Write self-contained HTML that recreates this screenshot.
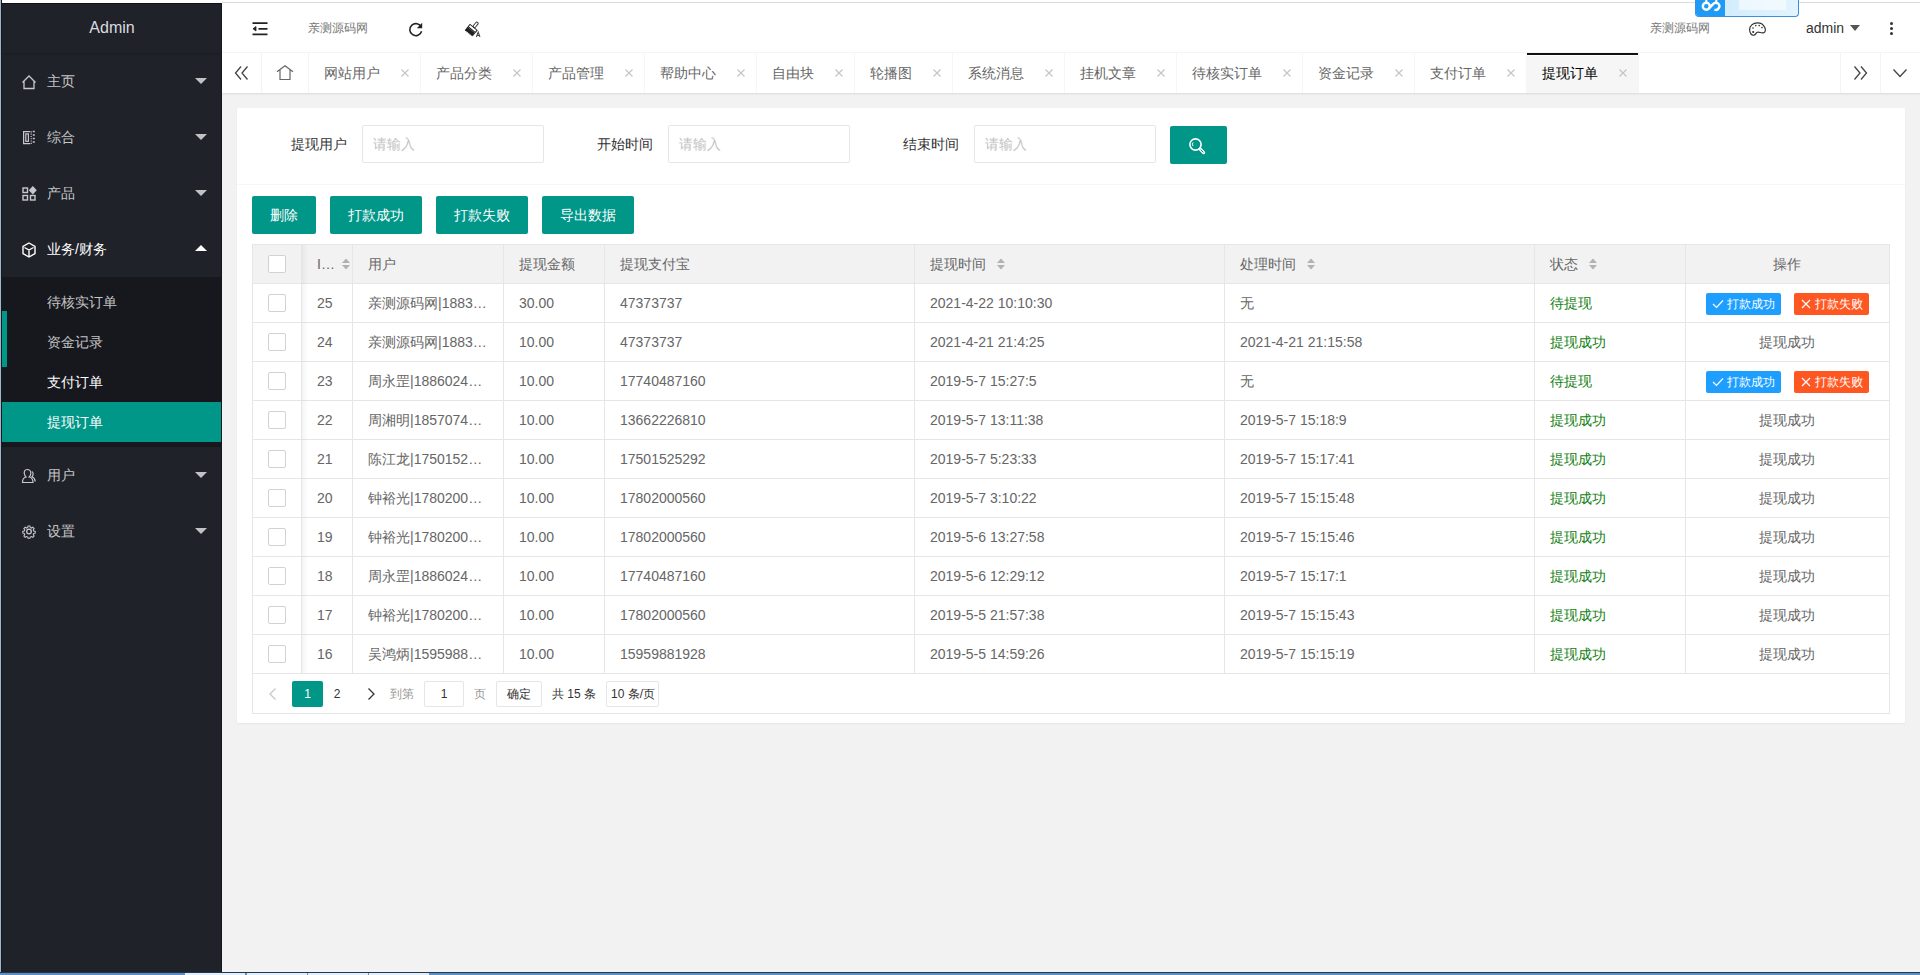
<!DOCTYPE html>
<html><head><meta charset="utf-8">
<style>
*{box-sizing:border-box;margin:0;padding:0}
html,body{width:1920px;height:975px;overflow:hidden;background:#f2f2f2;font-family:"Liberation Sans",sans-serif;font-size:14px;color:#666}
.abs{position:absolute}
#edge0{left:0;top:0;width:1px;height:975px;background:#a8b4c2}
#edge1{left:1px;top:0;width:1px;height:975px;background:#0e1b2b}
#topw{left:0;top:0;width:1920px;height:3px;background:#fff}
#topline{left:222px;top:2px;width:1698px;height:1px;background:#dcdcdc}
#side{left:2px;top:3px;width:220px;height:969px;background:#20222a}
#sidetop{left:2px;top:3px;width:220px;height:1px;background:#0f1115}
#sideright{left:221px;top:3px;width:1px;height:969px;background:#16181d}
#logo{left:2px;top:3px;width:220px;height:50px;line-height:50px;text-align:center;color:rgba(255,255,255,.85);font-size:16px;box-shadow:0 1px 2px 0 rgba(0,0,0,.15)}
.nav{left:2px;width:220px;height:56px;color:rgba(255,255,255,.75)}
.nav .t{position:absolute;left:45px;top:0;line-height:56px;font-size:14px}
.nav svg.ic{position:absolute;left:20px;top:20px}
.nav .tri{position:absolute;left:193px;top:25px;width:0;height:0;border-left:6px solid transparent;border-right:6px solid transparent;border-top:6px solid #c2c2c2}
.nav .tri.up{border-top:none;border-bottom:6px solid #fff;top:24px}
#sub{left:2px;top:277px;width:220px;height:170px;background:#17181e}
.child{left:2px;width:220px;height:40px;line-height:40px;color:rgba(255,255,255,.75)}
.child span{position:absolute;left:45px}
#bar{left:2px;top:311px;width:5px;height:56px;background:#009688}
#header{left:222px;top:3px;width:1698px;height:50px;background:#fff;border-bottom:1px solid #f6f6f6}
#tabs{left:222px;top:53px;width:1698px;height:40px;background:#fff;box-shadow:0 1px 2px 0 rgba(0,0,0,.1)}
.tab{position:absolute;top:0;height:40px;line-height:40px;border-right:1px solid #f6f6f6;color:#666;font-size:14px}
.tab span{position:absolute;left:15px;top:0}
.tab i{position:absolute;right:11px;top:15px;width:10px;height:10px}
#card{left:237px;top:108px;width:1668px;height:615px;background:#fff;border-radius:2px;box-shadow:0 1px 2px 0 rgba(0,0,0,.05)}
#cardhead{left:237px;top:184px;width:1668px;height:1px;background:#f6f6f6}
.lbl{position:absolute;top:134px;line-height:20px;color:#333;font-size:14px}
.inp{position:absolute;top:125px;width:182px;height:38px;border:1px solid #e6e6e6;border-radius:2px;background:#fff}
.inp span{position:absolute;left:10px;top:8px;line-height:20px;color:#c2c2c2}
.btn{position:absolute;top:196px;height:38px;line-height:38px;background:#009688;color:#fff;border-radius:2px;text-align:center;font-size:14px}
#tbl{left:252px;top:244px;width:1638px;height:470px;border:1px solid #e6e6e6;background:#fff}
#thead{left:253px;top:245px;width:1636px;height:38px;background:#f2f2f2}
.hl{position:absolute;left:253px;width:1636px;height:1px;background:#e6e6e6}
.vl{position:absolute;top:245px;width:1px;height:428px;background:#e6e6e6}
.cell{position:absolute;line-height:20px;white-space:nowrap;color:#666}
.cb{position:absolute;left:268px;width:18px;height:18px;border:1px solid #d2d2d2;background:#fff;border-radius:2px}
.sort{position:absolute;width:10px;height:14px}
.g{color:#127f12}
.xbtn{position:absolute;height:22px;line-height:22px;font-size:12px;color:#fff;border-radius:2px;padding-left:21px}
#foot{left:0;top:972px;width:1920px;height:3px;background:#5a8ec4;border-top:1px solid #22364f}
</style></head><body>
<div class="abs" id="topw"></div>
<div class="abs" id="topline"></div>
<div class="abs" id="side"></div>
<div class="abs" id="edge0"></div>
<div class="abs" id="edge1"></div>
<div class="abs" id="logo">Admin</div>


<div class="abs" id="sub"></div>
<div class="abs" id="bar"></div>
<div class="abs child" style="top:402px;background:#009688;color:#fff"><span>提现订单</span></div>
<div class="abs child" style="top:282px"><span>待核实订单</span></div>
<div class="abs child" style="top:322px"><span>资金记录</span></div>
<div class="abs child" style="top:362px;color:#fff"><span>支付订单</span></div>
<div class="abs nav" style="top:53px"><span class="t">主页</span><i class="tri"></i></div>
<div class="abs nav" style="top:109px"><span class="t">综合</span><i class="tri"></i></div>
<div class="abs nav" style="top:165px"><span class="t">产品</span><i class="tri"></i></div>
<div class="abs nav" style="top:221px;color:#fff"><span class="t">业务/财务</span><i class="tri up"></i></div>
<div class="abs nav" style="top:447px"><span class="t">用户</span><i class="tri"></i></div>
<div class="abs nav" style="top:503px"><span class="t">设置</span><i class="tri"></i></div>
<svg class="abs" style="left:20px;top:73px" width="18" height="18" viewBox="0 0 18 18" fill="none" stroke="#c8c8cc" stroke-width="1.3"><path d="M2.5 9.5 L9 3 L15.5 9.5 M4 8.5 V15.5 H14 V8.5"/></svg>
<svg class="abs" style="left:18px;top:126px" width="24" height="22" viewBox="0 0 24 22" fill="none" stroke="#c8c8cc" stroke-width="1.2"><path d="M12.2 5.6 H5.6 V17.6 H12.2"/><rect x="7.8" y="7.9" width="2.6" height="7.4"/><path d="M13.2 5.3 V18" stroke-dasharray="1.1 1.2"/><path d="M14.8 5.6 H16.8 M14.8 9.1 H16.8 M14.8 12.6 H16.8 M14.8 16.1 H16.8" stroke-width="1.5"/></svg>
<svg class="abs" style="left:20px;top:185px" width="18" height="18" viewBox="0 0 18 18" fill="none" stroke="#c8c8cc" stroke-width="1.4"><rect x="3" y="3" width="4.5" height="4.5"/><rect x="3" y="10.5" width="4.5" height="4.5"/><rect x="10.5" y="10.5" width="4.5" height="4.5"/><path d="M12.8 2 L15.8 5.2 L12.8 8.4 L9.8 5.2 Z" fill="#c8c8cc"/></svg>
<svg class="abs" style="left:20px;top:241px" width="18" height="18" viewBox="0 0 18 18" fill="none" stroke="#fff" stroke-width="1.4"><path d="M9 2 L15 5.3 V12.7 L9 16 L3 12.7 V5.3 Z M4.5 6.5 L9 9 L13.5 6.5 M9 9 V15"/></svg>
<svg class="abs" style="left:20px;top:467px" width="18" height="18" viewBox="0 0 18 18" fill="none" stroke="#c8c8cc" stroke-width="1.2"><path d="M7 2.5 C4.8 2.5 4 4.5 4.3 6.5 C4.6 8.5 5.5 9.5 6 10 C4 10.5 2.5 12 2.5 15.5 H13 C13 12 11.5 10.5 9.2 10 C9.8 9.5 10.6 8.5 10.8 6.5 C11 4.5 10 2.5 7 2.5 Z"/><path d="M11.8 4.5 C13.5 5 13.5 8.5 12 9.8 C13.8 10.5 15 12 15.2 14.5"/></svg>
<svg class="abs" style="left:20px;top:522px" width="18" height="18" viewBox="0 0 18 18" fill="none" stroke="#c8c8cc" stroke-width="1.3"><circle cx="9" cy="9.5" r="2.3"/><path d="M7.9 2.8 H10.1 L10.5 4.6 L12 5.3 L13.6 4.3 L15.1 5.9 L14.1 7.4 L14.7 8.9 L16.4 9.3 V11.4 L14.7 11.8 L14.1 13.3 L15.1 14.8 L13.6 16.3 L12 15.4 L10.5 16 L10.1 17.4 H7.9 L7.5 16 L6 15.4 L4.4 16.3 L2.9 14.8 L3.9 13.3 L3.3 11.8 L1.6 11.4 V9.3 L3.3 8.9 L3.9 7.4 L2.9 5.9 L4.4 4.3 L6 5.3 L7.5 4.6 Z" transform="translate(9 10) scale(0.84) translate(-9 -10)"/></svg>

<div class="abs" id="header"></div>
<svg class="abs" style="left:250px;top:20px" width="20" height="18" viewBox="0 0 20 18" fill="none" stroke="#222" stroke-width="1.8"><path d="M2.5 3.2 H17.5 M8.5 8.8 H17.5 M2.5 14.4 H17.5"/><path d="M3 8.8 L6 6.6 V11 Z" fill="#222" stroke-width="0.8"/></svg>
<div class="abs" style="left:308px;top:20px;line-height:16px;font-size:12px;color:#777">亲测源码网</div>
<svg class="abs" style="left:407px;top:20px" width="18" height="18" viewBox="0 0 18 18" fill="none" stroke="#222" stroke-width="1.55"><path d="M14.3 7.2 A6 6 0 1 0 14.6 11.2"/><path d="M15.2 2.8 V8.2 H9.8 Z" fill="#222" stroke="none"/></svg>
<svg class="abs" style="left:460px;top:17px" width="26" height="24" viewBox="0 0 26 24"><g transform="translate(11.5 12.8) rotate(40)"><rect x="-4.6" y="-3.2" width="9.2" height="2.9" fill="none" stroke="#222" stroke-width="1"/><rect x="-1.3" y="-9.6" width="2.6" height="6.2" rx="1.1" fill="none" stroke="#333" stroke-width="0.95"/><path d="M-5 0.3 H5 V4.6 L4.2 4 L3.4 5 L2.4 4.1 L1.5 5 L0.5 4.1 L-0.4 5 L-1.4 4.1 L-2.3 5 L-3.2 4.1 L-4.1 5 L-5 4.3 Z" fill="#222"/></g><path d="M16.4 20 L18.2 15 L20 20 M17 18.5 H19.4" fill="none" stroke="#444" stroke-width="1.05"/></svg>
<div class="abs" style="left:1650px;top:20px;line-height:16px;font-size:12px;color:#777">亲测源码网</div>
<svg class="abs" style="left:1748px;top:21px" width="19" height="16" viewBox="0 0 19 16" fill="none" stroke="#333" stroke-width="1.2"><path d="M9.5 1.8 C4.8 1.8 1.6 5 1.6 8.6 C1.6 12.5 3.8 14.6 6 14.2 C8.2 13.8 7.5 11.8 9.3 11.2 C11.2 10.6 13 12.3 15.4 11.8 C17.8 11.3 17.6 8.5 16.8 6.6 C15.6 3.6 12.8 1.8 9.5 1.8 Z"/><circle cx="5.2" cy="11" r="1.1" fill="#333" stroke="none"/><circle cx="5" cy="7" r="0.8" fill="#333" stroke="none"/><circle cx="7.8" cy="4.6" r="0.8" fill="#333" stroke="none"/><circle cx="11.2" cy="4.6" r="0.8" fill="#333" stroke="none"/><circle cx="14" cy="6.6" r="0.8" fill="#333" stroke="none"/></svg>
<div class="abs" style="left:1806px;top:19px;line-height:18px;font-size:14px;color:#333">admin</div>
<div class="abs" style="left:1850px;top:25px;width:0;height:0;border-left:5.5px solid transparent;border-right:5.5px solid transparent;border-top:6px solid #555"></div>
<div class="abs" style="left:1890px;top:22px;width:3px;height:3px;border-radius:50%;background:#333"></div>
<div class="abs" style="left:1890px;top:27px;width:3px;height:3px;border-radius:50%;background:#333"></div>
<div class="abs" style="left:1890px;top:32px;width:3px;height:3px;border-radius:50%;background:#333"></div>
<div class="abs" style="left:1695px;top:0;width:104px;height:17px;border:1px solid #3d8fdc;border-top:none;border-radius:0 0 4px 4px;background:linear-gradient(to right,#cdeafc,#e2f4fe);overflow:hidden"><div style="position:absolute;left:0;top:0;width:29px;height:17px;background:#1f9bf6"></div>
<svg style="position:absolute;left:0;top:0" width="30" height="16" viewBox="0 0 30 16" fill="none" stroke="#fff" stroke-width="2.4"><circle cx="10.3" cy="6.2" r="3.5"/><path d="M12.8 8.6 L17 4.2 A3.5 3.5 0 1 1 18.4 9.5"/><path d="M10.3 2.7 V-1 M20.3 2.7 V-1" stroke-width="2"/></svg>
<div style="position:absolute;left:43px;top:0;width:47px;height:10px;background:rgba(255,255,255,.55)"></div></div>

<div class="abs" id="tabs"></div>
<div class="abs" style="left:261px;top:53px;width:1px;height:40px;background:#f4f4f4"></div>
<svg class="abs" style="left:233px;top:64px" width="18" height="18" viewBox="0 0 18 18" fill="none" stroke="#444" stroke-width="1.3"><path d="M8 2.5 L2.5 9 L8 15.5 M14.5 2.5 L9 9 L14.5 15.5"/></svg>
<div class="abs" style="left:308px;top:53px;width:1px;height:40px;background:#f4f4f4"></div>
<svg class="abs" style="left:275px;top:64px" width="20" height="18" viewBox="0 0 20 18" fill="none" stroke="#666" stroke-width="1.2"><path d="M2 7.8 L10 1.7 L18 7.8 M5 6 V15.5 H15 V6"/></svg>
<div class="tab" style="left:309px;top:53px;width:112px;"><span>网站用户</span><svg style="position:absolute;right:11.5px;top:16px" width="8" height="8" viewBox="0 0 8 8" stroke="#c4c4c4" stroke-width="1.15"><path d="M0.5 0.5 L7.5 7.5 M7.5 0.5 L0.5 7.5"/></svg></div>
<div class="tab" style="left:421px;top:53px;width:112px;"><span>产品分类</span><svg style="position:absolute;right:11.5px;top:16px" width="8" height="8" viewBox="0 0 8 8" stroke="#c4c4c4" stroke-width="1.15"><path d="M0.5 0.5 L7.5 7.5 M7.5 0.5 L0.5 7.5"/></svg></div>
<div class="tab" style="left:533px;top:53px;width:112px;"><span>产品管理</span><svg style="position:absolute;right:11.5px;top:16px" width="8" height="8" viewBox="0 0 8 8" stroke="#c4c4c4" stroke-width="1.15"><path d="M0.5 0.5 L7.5 7.5 M7.5 0.5 L0.5 7.5"/></svg></div>
<div class="tab" style="left:645px;top:53px;width:112px;"><span>帮助中心</span><svg style="position:absolute;right:11.5px;top:16px" width="8" height="8" viewBox="0 0 8 8" stroke="#c4c4c4" stroke-width="1.15"><path d="M0.5 0.5 L7.5 7.5 M7.5 0.5 L0.5 7.5"/></svg></div>
<div class="tab" style="left:757px;top:53px;width:98px;"><span>自由块</span><svg style="position:absolute;right:11.5px;top:16px" width="8" height="8" viewBox="0 0 8 8" stroke="#c4c4c4" stroke-width="1.15"><path d="M0.5 0.5 L7.5 7.5 M7.5 0.5 L0.5 7.5"/></svg></div>
<div class="tab" style="left:855px;top:53px;width:98px;"><span>轮播图</span><svg style="position:absolute;right:11.5px;top:16px" width="8" height="8" viewBox="0 0 8 8" stroke="#c4c4c4" stroke-width="1.15"><path d="M0.5 0.5 L7.5 7.5 M7.5 0.5 L0.5 7.5"/></svg></div>
<div class="tab" style="left:953px;top:53px;width:112px;"><span>系统消息</span><svg style="position:absolute;right:11.5px;top:16px" width="8" height="8" viewBox="0 0 8 8" stroke="#c4c4c4" stroke-width="1.15"><path d="M0.5 0.5 L7.5 7.5 M7.5 0.5 L0.5 7.5"/></svg></div>
<div class="tab" style="left:1065px;top:53px;width:112px;"><span>挂机文章</span><svg style="position:absolute;right:11.5px;top:16px" width="8" height="8" viewBox="0 0 8 8" stroke="#c4c4c4" stroke-width="1.15"><path d="M0.5 0.5 L7.5 7.5 M7.5 0.5 L0.5 7.5"/></svg></div>
<div class="tab" style="left:1177px;top:53px;width:126px;"><span>待核实订单</span><svg style="position:absolute;right:11.5px;top:16px" width="8" height="8" viewBox="0 0 8 8" stroke="#c4c4c4" stroke-width="1.15"><path d="M0.5 0.5 L7.5 7.5 M7.5 0.5 L0.5 7.5"/></svg></div>
<div class="tab" style="left:1303px;top:53px;width:112px;"><span>资金记录</span><svg style="position:absolute;right:11.5px;top:16px" width="8" height="8" viewBox="0 0 8 8" stroke="#c4c4c4" stroke-width="1.15"><path d="M0.5 0.5 L7.5 7.5 M7.5 0.5 L0.5 7.5"/></svg></div>
<div class="tab" style="left:1415px;top:53px;width:112px;"><span>支付订单</span><svg style="position:absolute;right:11.5px;top:16px" width="8" height="8" viewBox="0 0 8 8" stroke="#c4c4c4" stroke-width="1.15"><path d="M0.5 0.5 L7.5 7.5 M7.5 0.5 L0.5 7.5"/></svg></div>
<div class="tab" style="left:1527px;top:53px;width:112px;background:#f6f6f6;color:#000;"><span>提现订单</span><svg style="position:absolute;right:11.5px;top:16px" width="8" height="8" viewBox="0 0 8 8" stroke="#c4c4c4" stroke-width="1.15"><path d="M0.5 0.5 L7.5 7.5 M7.5 0.5 L0.5 7.5"/></svg></div>
<div class="abs" style="left:1527px;top:53px;width:111px;height:2px;background:#111"></div><div class="abs" style="left:1527px;top:55px;width:111px;height:1px;background:#fff"></div>
<div class="abs" style="left:1840px;top:53px;width:1px;height:40px;background:#f4f4f4"></div>
<div class="abs" style="left:1880px;top:53px;width:1px;height:40px;background:#f4f4f4"></div>
<svg class="abs" style="left:1851px;top:64px" width="18" height="18" viewBox="0 0 18 18" fill="none" stroke="#444" stroke-width="1.3"><path d="M3.5 2.5 L9 9 L3.5 15.5 M10 2.5 L15.5 9 L10 15.5"/></svg>
<svg class="abs" style="left:1891px;top:64px" width="18" height="18" viewBox="0 0 18 18" fill="none" stroke="#444" stroke-width="1.3"><path d="M2.5 5.5 L9 12.5 L15.5 5.5"/></svg>

<div class="abs" id="card"></div>
<div class="abs" id="cardhead"></div>
<div class="lbl" style="left:291px">提现用户</div>
<div class="inp" style="left:362px"><span>请输入</span></div>
<div class="lbl" style="left:597px">开始时间</div>
<div class="inp" style="left:668px"><span>请输入</span></div>
<div class="lbl" style="left:903px">结束时间</div>
<div class="inp" style="left:974px"><span>请输入</span></div>
<div class="abs" style="left:1170px;top:126px;width:57px;height:38px;background:#009688;border-radius:2px"></div>
<svg class="abs" style="left:1187px;top:136px" width="20" height="20" viewBox="0 0 20 20" fill="none" stroke="#fff" stroke-width="1.6"><circle cx="8.5" cy="8.5" r="5.6"/><path d="M13.2 13.2 L16.6 16.6" stroke-width="3.2" stroke-linecap="round"/><path d="M13.9 13.9 L16.1 16.1" stroke="#009688" stroke-width="1" stroke-linecap="round"/><path d="M6 6.5 A3 3 0 0 0 6 10" stroke-width="1"/></svg>
<div class="btn" style="left:252px;width:64px">删除</div>
<div class="btn" style="left:330px;width:92px">打款成功</div>
<div class="btn" style="left:436px;width:92px">打款失败</div>
<div class="btn" style="left:542px;width:92px">导出数据</div>
<div class="abs" id="tbl"></div>
<div class="abs" id="thead"></div>
<div class="hl" style="top:283px"></div>
<div class="hl" style="top:322px"></div>
<div class="hl" style="top:361px"></div>
<div class="hl" style="top:400px"></div>
<div class="hl" style="top:439px"></div>
<div class="hl" style="top:478px"></div>
<div class="hl" style="top:517px"></div>
<div class="hl" style="top:556px"></div>
<div class="hl" style="top:595px"></div>
<div class="hl" style="top:634px"></div>
<div class="hl" style="top:673px"></div>
<div class="vl" style="left:301px"></div>
<div class="vl" style="left:352px"></div>
<div class="vl" style="left:503px"></div>
<div class="vl" style="left:604px"></div>
<div class="vl" style="left:914px"></div>
<div class="vl" style="left:1224px"></div>
<div class="vl" style="left:1534px"></div>
<div class="vl" style="left:1685px"></div>
<div class="abs" style="left:302px;top:245px;width:6px;height:428px;background:linear-gradient(to right,rgba(0,0,0,.045),rgba(0,0,0,0))"></div>
<div class="cb" style="top:255px"></div>
<div class="cell" style="left:317px;top:254px">I…</div><svg class="abs" style="left:341px;top:257px" width="10" height="14" viewBox="0 0 10 14" fill="#b2b2b2"><path d="M1 6 L5 1.5 L9 6 Z M1 8 L5 12.5 L9 8 Z"/></svg>
<div class="cell" style="left:368px;top:254px">用户</div>
<div class="cell" style="left:519px;top:254px">提现金额</div>
<div class="cell" style="left:620px;top:254px">提现支付宝</div>
<div class="cell" style="left:930px;top:254px">提现时间</div><svg class="abs" style="left:996px;top:257px" width="10" height="14" viewBox="0 0 10 14" fill="#b2b2b2"><path d="M1 6 L5 1.5 L9 6 Z M1 8 L5 12.5 L9 8 Z"/></svg>
<div class="cell" style="left:1240px;top:254px">处理时间</div><svg class="abs" style="left:1306px;top:257px" width="10" height="14" viewBox="0 0 10 14" fill="#b2b2b2"><path d="M1 6 L5 1.5 L9 6 Z M1 8 L5 12.5 L9 8 Z"/></svg>
<div class="cell" style="left:1550px;top:254px">状态</div><svg class="abs" style="left:1588px;top:257px" width="10" height="14" viewBox="0 0 10 14" fill="#b2b2b2"><path d="M1 6 L5 1.5 L9 6 Z M1 8 L5 12.5 L9 8 Z"/></svg>
<div class="cell" style="left:1685px;top:254px;width:204px;text-align:center">操作</div>
<div class="cb" style="top:294px"></div>
<div class="cell" style="left:317px;top:293px">25</div><div class="cell" style="left:368px;top:293px">亲测源码网|1883…</div><div class="cell" style="left:519px;top:293px">30.00</div><div class="cell" style="left:620px;top:293px">47373737</div><div class="cell" style="left:930px;top:293px">2021-4-22 10:10:30</div><div class="cell" style="left:1240px;top:293px">无</div><div class="cell g" style="left:1550px;top:293px">待提现</div><div class="xbtn" style="left:1706px;top:293px;width:75px;background:#1e9fff"><svg style="position:absolute;left:6px;top:5px" width="12" height="12" viewBox="0 0 12 12" fill="none" stroke="#fff" stroke-width="1.2"><path d="M1 6 L4.5 9.5 L11 2.5"/></svg>打款成功</div><div class="xbtn" style="left:1794px;top:293px;width:75px;background:#ff5722"><svg style="position:absolute;left:7px;top:6px" width="10" height="10" viewBox="0 0 10 10" fill="none" stroke="#fff" stroke-width="1.2"><path d="M1 1 L9 9 M9 1 L1 9"/></svg>打款失败</div>
<div class="cb" style="top:333px"></div>
<div class="cell" style="left:317px;top:332px">24</div><div class="cell" style="left:368px;top:332px">亲测源码网|1883…</div><div class="cell" style="left:519px;top:332px">10.00</div><div class="cell" style="left:620px;top:332px">47373737</div><div class="cell" style="left:930px;top:332px">2021-4-21 21:4:25</div><div class="cell" style="left:1240px;top:332px">2021-4-21 21:15:58</div><div class="cell g" style="left:1550px;top:332px">提现成功</div><div class="cell" style="left:1685px;top:332px;width:204px;text-align:center">提现成功</div>
<div class="cb" style="top:372px"></div>
<div class="cell" style="left:317px;top:371px">23</div><div class="cell" style="left:368px;top:371px">周永罡|1886024…</div><div class="cell" style="left:519px;top:371px">10.00</div><div class="cell" style="left:620px;top:371px">17740487160</div><div class="cell" style="left:930px;top:371px">2019-5-7 15:27:5</div><div class="cell" style="left:1240px;top:371px">无</div><div class="cell g" style="left:1550px;top:371px">待提现</div><div class="xbtn" style="left:1706px;top:371px;width:75px;background:#1e9fff"><svg style="position:absolute;left:6px;top:5px" width="12" height="12" viewBox="0 0 12 12" fill="none" stroke="#fff" stroke-width="1.2"><path d="M1 6 L4.5 9.5 L11 2.5"/></svg>打款成功</div><div class="xbtn" style="left:1794px;top:371px;width:75px;background:#ff5722"><svg style="position:absolute;left:7px;top:6px" width="10" height="10" viewBox="0 0 10 10" fill="none" stroke="#fff" stroke-width="1.2"><path d="M1 1 L9 9 M9 1 L1 9"/></svg>打款失败</div>
<div class="cb" style="top:411px"></div>
<div class="cell" style="left:317px;top:410px">22</div><div class="cell" style="left:368px;top:410px">周湘明|1857074…</div><div class="cell" style="left:519px;top:410px">10.00</div><div class="cell" style="left:620px;top:410px">13662226810</div><div class="cell" style="left:930px;top:410px">2019-5-7 13:11:38</div><div class="cell" style="left:1240px;top:410px">2019-5-7 15:18:9</div><div class="cell g" style="left:1550px;top:410px">提现成功</div><div class="cell" style="left:1685px;top:410px;width:204px;text-align:center">提现成功</div>
<div class="cb" style="top:450px"></div>
<div class="cell" style="left:317px;top:449px">21</div><div class="cell" style="left:368px;top:449px">陈江龙|1750152…</div><div class="cell" style="left:519px;top:449px">10.00</div><div class="cell" style="left:620px;top:449px">17501525292</div><div class="cell" style="left:930px;top:449px">2019-5-7 5:23:33</div><div class="cell" style="left:1240px;top:449px">2019-5-7 15:17:41</div><div class="cell g" style="left:1550px;top:449px">提现成功</div><div class="cell" style="left:1685px;top:449px;width:204px;text-align:center">提现成功</div>
<div class="cb" style="top:489px"></div>
<div class="cell" style="left:317px;top:488px">20</div><div class="cell" style="left:368px;top:488px">钟裕光|1780200…</div><div class="cell" style="left:519px;top:488px">10.00</div><div class="cell" style="left:620px;top:488px">17802000560</div><div class="cell" style="left:930px;top:488px">2019-5-7 3:10:22</div><div class="cell" style="left:1240px;top:488px">2019-5-7 15:15:48</div><div class="cell g" style="left:1550px;top:488px">提现成功</div><div class="cell" style="left:1685px;top:488px;width:204px;text-align:center">提现成功</div>
<div class="cb" style="top:528px"></div>
<div class="cell" style="left:317px;top:527px">19</div><div class="cell" style="left:368px;top:527px">钟裕光|1780200…</div><div class="cell" style="left:519px;top:527px">10.00</div><div class="cell" style="left:620px;top:527px">17802000560</div><div class="cell" style="left:930px;top:527px">2019-5-6 13:27:58</div><div class="cell" style="left:1240px;top:527px">2019-5-7 15:15:46</div><div class="cell g" style="left:1550px;top:527px">提现成功</div><div class="cell" style="left:1685px;top:527px;width:204px;text-align:center">提现成功</div>
<div class="cb" style="top:567px"></div>
<div class="cell" style="left:317px;top:566px">18</div><div class="cell" style="left:368px;top:566px">周永罡|1886024…</div><div class="cell" style="left:519px;top:566px">10.00</div><div class="cell" style="left:620px;top:566px">17740487160</div><div class="cell" style="left:930px;top:566px">2019-5-6 12:29:12</div><div class="cell" style="left:1240px;top:566px">2019-5-7 15:17:1</div><div class="cell g" style="left:1550px;top:566px">提现成功</div><div class="cell" style="left:1685px;top:566px;width:204px;text-align:center">提现成功</div>
<div class="cb" style="top:606px"></div>
<div class="cell" style="left:317px;top:605px">17</div><div class="cell" style="left:368px;top:605px">钟裕光|1780200…</div><div class="cell" style="left:519px;top:605px">10.00</div><div class="cell" style="left:620px;top:605px">17802000560</div><div class="cell" style="left:930px;top:605px">2019-5-5 21:57:38</div><div class="cell" style="left:1240px;top:605px">2019-5-7 15:15:43</div><div class="cell g" style="left:1550px;top:605px">提现成功</div><div class="cell" style="left:1685px;top:605px;width:204px;text-align:center">提现成功</div>
<div class="cb" style="top:645px"></div>
<div class="cell" style="left:317px;top:644px">16</div><div class="cell" style="left:368px;top:644px">吴鸿炳|1595988…</div><div class="cell" style="left:519px;top:644px">10.00</div><div class="cell" style="left:620px;top:644px">15959881928</div><div class="cell" style="left:930px;top:644px">2019-5-5 14:59:26</div><div class="cell" style="left:1240px;top:644px">2019-5-7 15:15:19</div><div class="cell g" style="left:1550px;top:644px">提现成功</div><div class="cell" style="left:1685px;top:644px;width:204px;text-align:center">提现成功</div>

<svg class="abs" style="left:267px;top:687px" width="12" height="14" viewBox="0 0 12 14" fill="none" stroke="#c8c8c8" stroke-width="1.3"><path d="M8.5 1.5 L3 7 L8.5 12.5"/></svg>
<div class="abs" style="left:292px;top:681px;width:31px;height:26px;background:#009688;border-radius:2px;color:#fff;font-size:12px;line-height:26px;text-align:center">1</div>
<div class="abs" style="left:323px;top:681px;width:28px;height:26px;color:#333;font-size:12px;line-height:26px;text-align:center">2</div>
<svg class="abs" style="left:365px;top:687px" width="12" height="14" viewBox="0 0 12 14" fill="none" stroke="#333" stroke-width="1.3"><path d="M3.5 1.5 L9 7 L3.5 12.5"/></svg>
<div class="abs" style="left:390px;top:681px;line-height:26px;font-size:12px;color:#999">到第</div>
<div class="abs" style="left:424px;top:681px;width:40px;height:26px;border:1px solid #e6e6e6;border-radius:2px;line-height:24px;text-align:center;font-size:12px;color:#333">1</div>
<div class="abs" style="left:474px;top:681px;line-height:26px;font-size:12px;color:#999">页</div>
<div class="abs" style="left:496px;top:681px;width:46px;height:26px;border:1px solid #e6e6e6;border-radius:2px;line-height:24px;text-align:center;font-size:12px;color:#333">确定</div>
<div class="abs" style="left:552px;top:681px;line-height:26px;font-size:12px;color:#333">共 15 条</div>
<div class="abs" style="left:606px;top:681px;width:53px;height:26px;border:1px solid #e6e6e6;border-radius:2px;line-height:24px;padding-left:4px;font-size:12px;color:#333">10 条/页</div>
<div class="abs" id="foot"></div>
<div class="abs" id="sidetop"></div>
<div class="abs" id="sideright"></div>
<div class="abs" style="left:184px;top:973px;width:61px;height:2px;background:#dfeefa;border-left:1px solid #6d8fb0"></div>
<div class="abs" style="left:246px;top:973px;width:61px;height:2px;background:#dfeefa;border-left:1px solid #6d8fb0"></div>
<div class="abs" style="left:307px;top:973px;width:61px;height:2px;background:#dfeefa;border-left:1px solid #6d8fb0"></div>
<div class="abs" style="left:368px;top:973px;width:61px;height:2px;background:#dfeefa;border-left:1px solid #6d8fb0"></div>

</body></html>
